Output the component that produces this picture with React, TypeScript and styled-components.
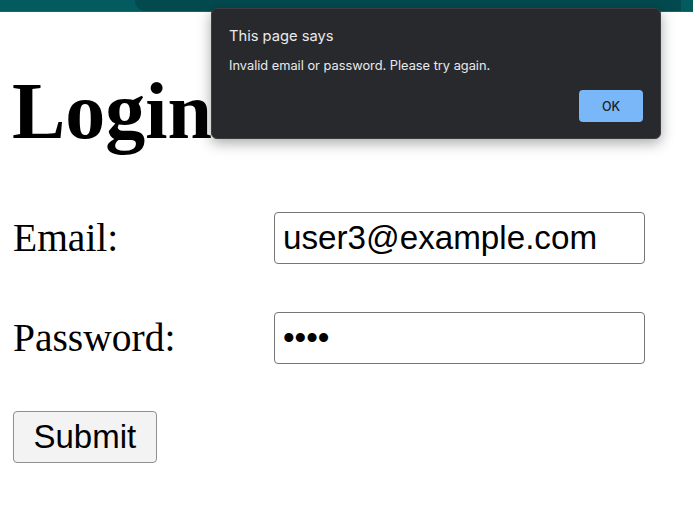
import styled, { createGlobalStyle } from 'styled-components';

const GlobalStyle = createGlobalStyle`
  html, body {
    margin: 0;
    padding: 0;
    background: #ffffff;
  }
  body {
    font-family: 'Liberation Serif', 'Times New Roman', serif;
    width: 693px;
    height: 509px;
    overflow: hidden;
  }
`;

const Page = styled.div`
  position: relative;
  width: 693px;
  height: 509px;
  overflow: hidden;
`;

const ChromeStrip = styled.div`
  display: flex;
  align-items: stretch;
  height: 11px;
  background: #045b5f;
  border-bottom: 1px solid #0b6a6e;
`;

const ChromeTab = styled.div`
  flex: 1;
  margin-left: 135px;
  margin-right: 12px;
  background: #034a4f;
  border-radius: 0 0 0 10px;
`;

const Content = styled.main`
  padding: 0 12px;
`;

const Title = styled.h1`
  margin: 55px 0 0;
  font-family: 'Liberation Serif', 'Times New Roman', serif;
  font-size: 80px;
  font-weight: bold;
  line-height: 88px;
  color: #000;
`;

const Form = styled.form`
  display: grid;
  grid-template-columns: 262px 371px;
  grid-auto-rows: 52px;
  row-gap: 48px;
  margin-top: 57px;
`;

const Label = styled.label`
  font-family: 'Liberation Serif', 'Times New Roman', serif;
  font-size: 39.5px;
  line-height: 52px;
  color: #000;
  padding-left: 1px;
`;

const Field = styled.input`
  box-sizing: border-box;
  width: 371px;
  height: 52px;
  margin: 0;
  padding: 0 8px;
  border: 1px solid #767676;
  border-radius: 4px;
  font-family: 'Liberation Sans', Arial, sans-serif;
  font-size: 33.2px;
  color: #000;
  background: #fff;
  outline: none;
`;

const SubmitButton = styled.button`
  box-sizing: border-box;
  height: 52px;
  margin: 47px 0 0 1px;
  padding: 0 19.5px;
  border: 1px solid #8f8f8f;
  border-radius: 4px;
  background: #f3f3f3;
  font-family: 'Liberation Sans', Arial, sans-serif;
  font-size: 33px;
  color: #000;
`;

const Dialog = styled.div`
  position: absolute;
  top: 8px;
  left: 211px;
  box-sizing: border-box;
  width: 450px;
  height: 131px;
  padding: 18px 17px 16px 17px;
  display: flex;
  flex-direction: column;
  background: #28292d;
  border: 1px solid #3c3d41;
  border-radius: 6px;
  box-shadow: 0 4px 14px rgba(0, 0, 0, 0.35);
  font-family: Inter, 'Noto Sans', sans-serif;
  color: #e8eaed;
`;

const DialogTitle = styled.div`
  font-size: 14.7px;
  line-height: 18px;
`;

const DialogMessage = styled.div`
  margin-top: 12px;
  font-size: 12.8px;
  line-height: 17px;
`;

const DialogActions = styled.div`
  display: flex;
  justify-content: flex-end;
  margin-top: auto;
`;

const OkButton = styled.button`
  width: 64px;
  height: 32px;
  border: none;
  border-radius: 4px;
  background: #7ab7f8;
  color: #202124;
  font-family: Inter, 'Noto Sans', sans-serif;
  font-size: 12.5px;
  font-weight: 500;
`;

export default function App() {
  return (
    <Page>
      <GlobalStyle />
      <ChromeStrip>
        <ChromeTab />
      </ChromeStrip>
      <Content>
        <Title>Login</Title>
        <Form onSubmit={(e) => e.preventDefault()}>
          <Label htmlFor="email">Email:</Label>
          <Field id="email" type="email" defaultValue="user3@example.com" />
          <Label htmlFor="password">Password:</Label>
          <Field id="password" type="password" defaultValue="1234" />
        </Form>
        <SubmitButton type="button">Submit</SubmitButton>
      </Content>
      <Dialog role="alertdialog">
        <DialogTitle>This page says</DialogTitle>
        <DialogMessage>Invalid email or password. Please try again.</DialogMessage>
        <DialogActions>
          <OkButton type="button">OK</OkButton>
        </DialogActions>
      </Dialog>
    </Page>
  );
}
